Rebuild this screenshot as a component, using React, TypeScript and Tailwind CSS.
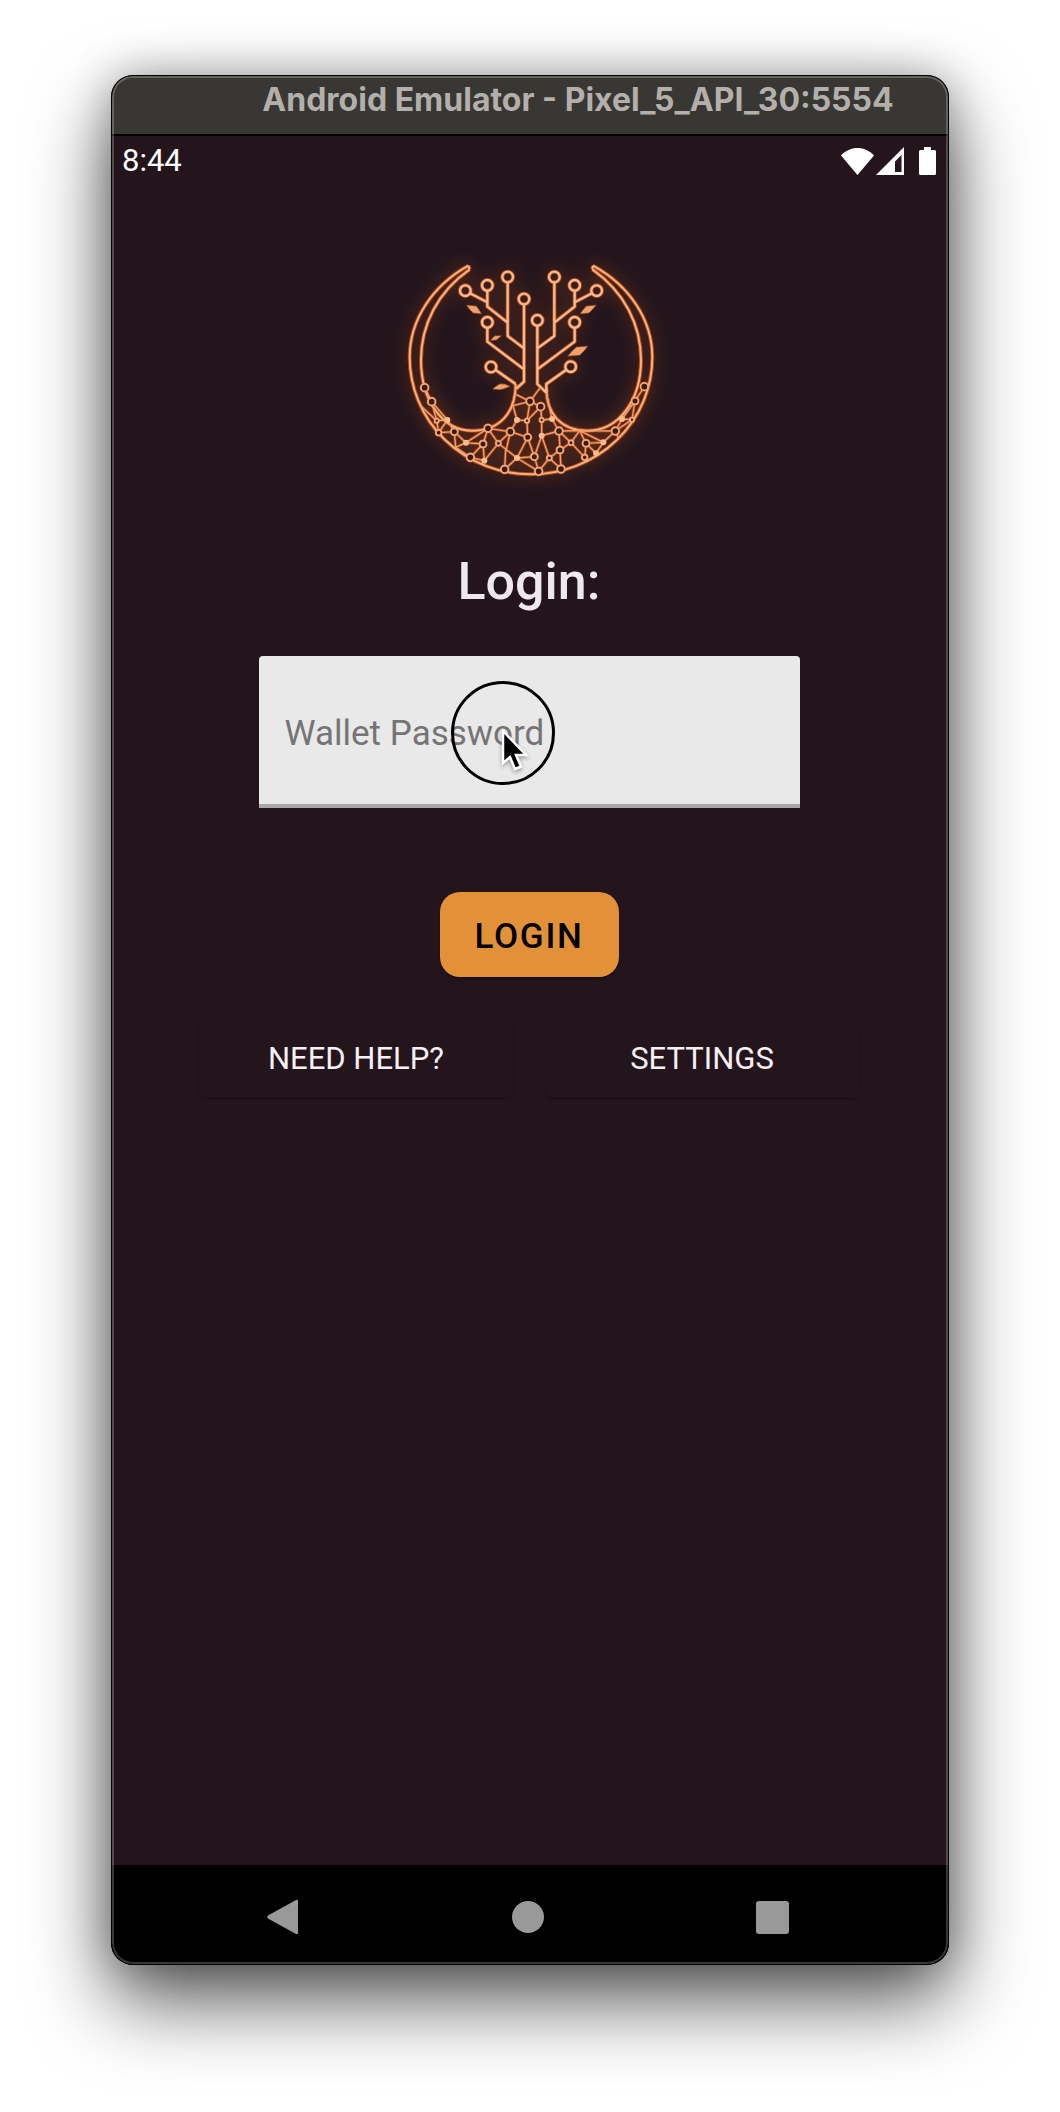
import React from "react";

type Point = [number, number];

const branchNodes: Point[] = [
  [229, 152], [295, 136], [356, 111], [405, 177], [445, 241], [496, 111],
  [557, 136], [623, 152], [557, 247], [545, 380], [295, 247], [306, 381],
];

// x, y, radius
const openRootNodes: [number, number, number][] = [
  [107, 443, 11], [128, 485, 11], [143, 542, 6], [149, 578, 8], [196, 575, 10],
  [297, 565, 11], [282, 612, 10], [328, 610, 7], [244, 652, 11], [347, 688, 11],
  [364, 575, 11], [423, 484, 11], [455, 500, 11], [414, 542, 6], [416, 592, 10],
  [436, 650, 10], [449, 694, 11], [516, 687, 11], [481, 654, 7], [513, 630, 10],
  [510, 573, 11], [458, 540, 6], [546, 608, 7], [591, 610, 10], [587, 652, 8],
  [679, 573, 11], [729, 539, 6], [738, 483, 10], [766, 440, 11],
];

const filledRootNodes: Point[] = [
  [175, 540], [231, 608], [286, 662], [384, 654], [384, 540], [458, 587],
  [489, 537], [643, 607], [621, 640], [699, 537],
];

const branches =
  "M243 160L295 187M295 152V200L356 248M356 127V288L405 325M405 193V425L382 446M295 263V305L405 388M320 390L380 432" +
  "M445 257V432L472 458M496 127V288L445 325M557 152V200L496 248M609 160L557 187M557 263V305L445 388M531 390L472 432V458";

const crescent =
  "M238 77C130 137 62 240 62 352A364 351 0 0 0 426 703A364 351 0 0 0 790 352C790 240 722 137 612 77" +
  "M242 88C146 155 96 255 96 360C96 480 160 572 250 572C330 572 380 520 380 432" +
  "M610 88C706 155 756 255 756 360C756 480 690 572 595 572C515 572 472 520 472 445M238 77L242 88M612 77L610 88";

const mesh =
  "M107 443L128 485L143 542L149 578L175 540L196 575L149 578M98 500L143 542L175 540M128 485L175 540M196 575L200 622L231 608L282 612L297 565L231 608L196 575" +
  "M282 612L244 652L200 622M282 612L286 662M244 652L286 662M297 565L328 610L364 575L297 565M328 610L286 662M328 610L384 654L347 688L350 628M364 575L352 628" +
  "M364 575L416 592L384 654L436 650M384 654L449 694M416 592L414 542L384 540L364 575M384 540L372 497L423 484L382 464M414 542L423 484L452 445M414 542L455 500L423 484" +
  "M416 592L436 650L458 587L481 654L449 694L436 650M458 587L458 540L489 537L472 458M455 500L458 540M489 537L510 573L458 587M510 573L513 630L481 654L516 687L513 630L546 608L510 573L572 572L546 608L587 652" +
  "M572 572L591 610L643 607L572 572M591 610L587 652M591 610L621 640M643 607L621 640M643 607L679 573L572 572M679 573L699 537L729 539L738 483L766 440M699 537L738 483M679 573L690 598M679 573L729 539";

function TreeStrokes() {
  return (
    <g>
      <path d={crescent} />
      <path d={branches} />
      {branchNodes.map(([x, y]) => (
        <circle key={`${x}-${y}`} cx={x} cy={y} r="16" />
      ))}
    </g>
  );
}

function MeshStrokes() {
  return (
    <g>
      <path d={mesh} />
      {openRootNodes.map(([x, y, r]) => (
        <circle key={`${x}-${y}`} cx={x} cy={y} r={r} fill="#3a1c12" />
      ))}
    </g>
  );
}

function TreeLogo() {
  return (
    <svg viewBox="0 0 840 750" className="h-[250px] w-[280px]" role="img" aria-label="Circuit tree" fill="none" strokeLinejoin="round">
      <defs>
        <filter id="halo" x="-20%" y="-20%" width="140%" height="140%">
          <feGaussianBlur stdDeviation="26" />
        </filter>
        <filter id="soft" x="-10%" y="-10%" width="120%" height="120%">
          <feGaussianBlur stdDeviation="2" />
        </filter>
      </defs>
      <g filter="url(#halo)" stroke="#c45a14" strokeWidth="14" opacity="0.36">
        <TreeStrokes />
        <MeshStrokes />
      </g>
      <g filter="url(#soft)" stroke="#c04c10" strokeWidth="12" opacity="0.85">
        <TreeStrokes />
      </g>
      <g filter="url(#soft)" stroke="#b8480f" strokeWidth="9" opacity="0.8">
        <MeshStrokes />
      </g>
      <path d={crescent} stroke="#f5b284" strokeWidth="6" />
      <g stroke="#eda073" strokeWidth="4">
        <MeshStrokes />
      </g>
      <g fill="#3a1c12" stroke="#f3ab7c" strokeWidth="5">
        {openRootNodes.map(([x, y, r]) => (
          <circle key={`${x}-${y}`} cx={x} cy={y} r={r} />
        ))}
      </g>
      <g stroke="#f4ba94" strokeWidth="7">
        <path d={branches} />
        {branchNodes.map(([x, y]) => (
          <circle key={`${x}-${y}`} cx={x} cy={y} r="16" />
        ))}
      </g>
      <g fill="#fbbd8c">
        {filledRootNodes.map(([x, y]) => (
          <circle key={`${x}-${y}`} cx={x} cy={y} r="9" />
        ))}
      </g>
      <g fill="#f0a06a" stroke="#8a3a12" strokeWidth="2">
        <path d="M232 195L262 198Q270 208 278 222L252 219Q240 208 232 195Z" />
        <path d="M622 195L592 198Q582 208 573 222L600 219Q612 208 622 195Z" />
        <path d="M338 287L318 287Q310 293 304 302L322 300Q330 294 338 287Z" />
        <path d="M597 318L562 321Q548 332 536 349L572 346Q586 334 597 318Z" />
        <path d="M364 439Q346 429 332 432Q320 438 311 447Q332 452 344 447Q354 442 364 439Z" />
      </g>
    </svg>
  );
}

function StatusIcons() {
  return (
    <div className="flex items-center" role="img" aria-label="Wi-Fi, mobile signal, battery">
      <svg viewBox="0 0 33 27" className="h-[27px] w-[33px] fill-white">
        <path d="M0 7.5C9-2.5 24-2.5 33 7.5L16.500 27Z" />
      </svg>
      <svg viewBox="0 0 28 28" className="ml-[2px] h-7 w-7">
        <path d="M28 0V28H0Z" fill="#fff" />
        <path d="M25.500 8V25H19V14.500Z" fill="#24151d" />
      </svg>
      <svg viewBox="0 0 17 28" className="ml-[15px] h-7 w-[17px] fill-white">
        <path d="M5 0H12V3H15.500Q17 3 17 4.500V26.500Q17 28 15.500 28H1.500Q0 28 0 26.500V4.500Q0 3 1.500 3H5Z" />
      </svg>
    </div>
  );
}

function TouchPointer() {
  return (
    <div className="pointer-events-none absolute top-[25px] left-[192px] h-[104px] w-[104px] rounded-full border-3 border-black">
      <svg viewBox="0 0 28 44" className="absolute top-[45px] left-[47px] h-11 w-7 overflow-visible drop-shadow-[0_2px_2px_rgba(0,0,0,0.35)]">
        <path d="M2 2V34L9 28L14 40L20 37.500L15 26H25Z" fill="#000" stroke="#fff" strokeWidth="2.500" />
      </svg>
    </div>
  );
}

export default function App() {
  return (
    <div className="flex min-h-screen flex-col bg-white px-[111px] pt-[75px] pb-[147px] font-[Roboto,sans-serif]">
      <div className="relative flex flex-1 flex-col overflow-clip rounded-[22px] bg-[#24151d] shadow-[0_36px_80px_rgba(0,0,0,0.65),0_0_44px_rgba(0,0,0,0.28)]">
        <header className="flex h-[61px] items-start justify-center border-b-2 border-black bg-[#393733] pt-[7px] pl-24">
          <h1 className="font-[Inter,sans-serif] text-[32px] leading-9 font-bold whitespace-nowrap text-[#b3afab]">
            Android Emulator - Pixel_5_API_30:5554
          </h1>
        </header>

        <div className="flex h-[50px] items-center justify-between pr-[13px] pl-[11px] text-white">
          <time className="text-[31px] leading-9">8:44</time>
          <StatusIcons />
        </div>

        <main className="flex flex-1 flex-col items-center pt-[54px] pr-[2px]">
          <TreeLogo />
          <h2 className="mt-[62px] text-[52px] leading-[60px] font-medium text-[#efe9ee]">Login:</h2>

          <form className="flex w-full flex-col items-center" onSubmit={(e) => e.preventDefault()}>
            <div className="relative mt-[44px] w-[541px] max-w-full">
              <input
                type="password"
                aria-label="Wallet Password"
                placeholder="Wallet Password"
                className="h-[152px] w-full rounded-t-[4px] border-b-4 border-[#a9a7a8] bg-[#e9e9e9] px-[26px] pt-1.5 text-[35px] text-[#222] outline-none placeholder:text-[#757575] placeholder:opacity-100"
              />
              <TouchPointer />
            </div>
            <button
              type="submit"
              className="mt-[84px] h-[85px] w-[179px] rounded-[20px] bg-[#e39138] pt-1.5 text-[35px] font-medium tracking-wider text-black shadow-[0_2px_3px_rgba(0,0,0,0.3)]"
            >
              LOGIN
            </button>
          </form>

          <div className="mt-[44px] flex gap-[34px] text-[31px] text-[#f5f0f4]">
            <button type="button" className="h-[76px] w-[312px] rounded-[4px] bg-[#24151d] shadow-[0_3px_3px_rgba(0,0,0,0.2)]">
              NEED HELP?
            </button>
            <button type="button" className="h-[76px] w-[312px] rounded-[4px] bg-[#24151d] shadow-[0_3px_3px_rgba(0,0,0,0.2)]">
              SETTINGS
            </button>
          </div>
        </main>

        <nav className="flex h-[100px] items-center justify-between bg-black pt-1 pr-40 pl-[156px]">
          <button type="button" aria-label="Back">
            <svg viewBox="0 0 32 36" className="h-9 w-8 fill-[#999]">
              <path d="M1 16.500L29 1Q31 0 31 2V34Q31 36 29 35L1 19.500Q-.5 18 1 16.500Z" />
            </svg>
          </button>
          <button type="button" aria-label="Home" className="h-8 w-8 rounded-full bg-[#999]" />
          <button type="button" aria-label="Recent apps" className="h-[33px] w-[33px] rounded-[3px] bg-[#999]" />
        </nav>

        <div className="pointer-events-none absolute inset-0 rounded-[22px] border border-black shadow-[inset_0_0_0_2px_rgba(255,255,255,0.22)]" />
      </div>
    </div>
  );
}
